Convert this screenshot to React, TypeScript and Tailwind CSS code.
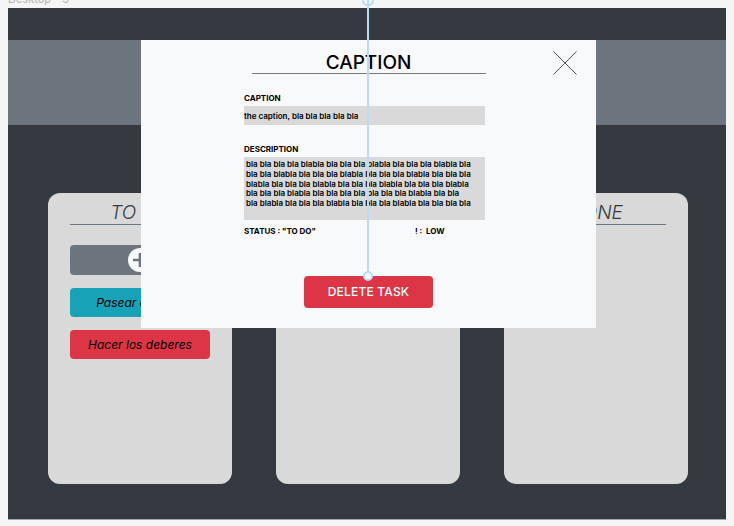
const lines = [
  'bla bla bla bla blabla bla bla bla blabla bla bla bla blabla bla',
  'bla bla blabla bla bla bla blabla bla bla bla blabla bla bla bla',
  'blabla bla bla bla blabla bla bla bla blabla bla bla bla blabla',
  'bla bla bla blabla bla bla bla bla bla bla bla blabla bla bla',
  'bla blabla bla bla bla blabla bla bla bla blabla bla bla bla bla',
]

function Card({ title, children }: { title: string; children?: React.ReactNode }) {
  return (
    <div className="w-[184px] h-[291px] shrink-0 rounded-[12px] bg-[#d9d9d9] px-[22px] pt-[9px]">
      <div className="text-center text-[19px] italic font-light leading-[22px] text-[#343a40] border-b border-[#6c757d]">
        {title}
      </div>
      <div className="mt-[20px] flex flex-col gap-[13px]">{children}</div>
    </div>
  )
}

function TaskButton({ label, color }: { label: string; color: string }) {
  return (
    <div
      className={`h-[29px] rounded-[4px] ${color} flex items-center justify-center text-[12px] italic text-black`}
    >
      {label}
    </div>
  )
}

function TaskModal() {
  return (
    <div className="absolute left-[133px] top-[32px] w-[455px] h-[288px] bg-[#f8f9fa]">
      <div className="mx-auto mt-[12px] w-[234px] border-b border-[#7a7a7a] text-center text-[19px] font-medium leading-[21px] text-black">
        CAPTION
      </div>
      <svg
        className="absolute left-[412px] top-[11px]"
        width="24"
        height="24"
        viewBox="0 0 24 24"
      >
        <path d="M0.5 0.5L23.5 23.5M23.5 0.5L0.5 23.5" stroke="#555" strokeWidth="1" />
      </svg>

      <div className="ml-[103px] w-[241px] text-black">
        <div className="mt-[19px] text-[8px] font-bold leading-[10px]">CAPTION</div>
        <div className="mt-[3px] h-[19px] bg-[#d9d9d9] flex items-center text-[8px] font-semibold">
          the caption, bla bla bla bla bla
        </div>

        <div className="mt-[19px] text-[8px] font-bold leading-[10px]">DESCRIPTION</div>
        <div className="mt-[3px] h-[63px] bg-[#d9d9d9] px-[2px] pt-[3px] text-[8px] font-semibold leading-[9.8px] whitespace-nowrap">
          {lines.map((l, i) => (
            <div key={i}>{l}</div>
          ))}
        </div>

        <div className="mt-[6px] flex text-[8px] font-bold leading-[10px]">
          <span className="w-[171px]">STATUS : "TO DO"</span>
          <span>! :&nbsp;&nbsp;LOW</span>
        </div>
      </div>

      <div className="mt-[40px] flex justify-center">
        <button className="w-[129px] h-[32px] rounded-[4px] bg-[#dc3545] text-white text-[12px] font-medium tracking-[0.2px]">
          DELETE TASK
        </button>
      </div>
    </div>
  )
}

export default function App() {
  return (
    <div className="min-h-[526px] bg-[#f5f5f5] font-['Inter',sans-serif]">
      <div className="h-2 overflow-hidden pl-2">
        <div className="-mt-[7px] text-[11px] leading-[13px] text-[#b3b3b3]">Desktop - 3</div>
      </div>

      <div className="relative mx-2 h-[512px] bg-[#343a40] border-b border-[#a6a9ad]">
        <div className="h-8" />
        <div className="h-[85px] bg-[#6c757d]" />

        <div className="flex gap-[44px] pl-[40px] pt-[68px]">
          <Card title="TO DO">
            <div className="h-[30px] rounded-[4px] bg-[#6c757d] flex items-center justify-center">
              <svg width="24" height="24" viewBox="0 0 24 24">
                <circle cx="12" cy="12" r="12" fill="#f8f9fa" />
                <path d="M12 5V19M5 12H19" stroke="#6c757d" strokeWidth="2.6" />
              </svg>
            </div>
            <TaskButton label="Pasear al perro" color="bg-[#17a2b8]" />
            <TaskButton label="Hacer los deberes" color="bg-[#dc3545]" />
          </Card>
          <Card title="IN PROGRESS" />
          <Card title="DONE" />
        </div>

        <TaskModal />

        {/* design guide overlay */}
        <div className="absolute left-[359px] -top-[8px] h-[276px] w-[2px] bg-[#b6dcfa]" />
        <div className="absolute left-[354px] -top-[12px] h-[10px] w-[12px] rounded-full border-2 border-[#b6dcfa]" />
        <div className="absolute left-[355px] top-[263px] h-[10px] w-[10px] rounded-full border-2 border-[#b6dcfa] bg-white" />
      </div>
    </div>
  )
}
